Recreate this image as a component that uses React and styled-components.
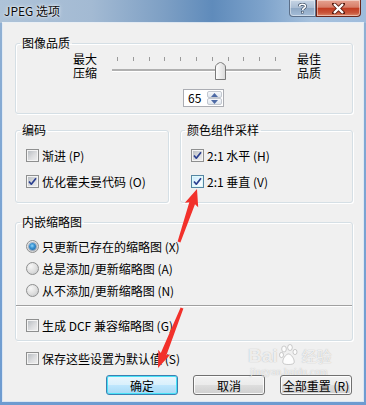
import React from 'react';
import styled, { createGlobalStyle } from 'styled-components';

const GlobalStyle = createGlobalStyle`
  html, body { margin: 0; padding: 0; }
  body {
    font-family: "Noto Sans CJK SC", "Noto Sans", sans-serif;
    font-size: 12px;
    color: #000;
  }
`;

const Window = styled.div`
  position: relative;
  width: 366px;
  height: 405px;
  display: flex;
  flex-direction: column;
  overflow: hidden;
  background: linear-gradient(180deg, #93b2d3 0%, #7ea6d3 40%, #6d9bd0 100%);
`;

const TitleBar = styled.div`
  height: 23px;
  display: flex;
  justify-content: space-between;
  align-items: flex-start;
  padding-left: 4px;
  background: linear-gradient(90deg, #aec3d8 0%, #a3bad3 25%, #7d9fc4 45%, #5f8bbb 58%, #7ea3cb 72%, #a6c1dd 85%, #9fbcdc 100%);
`;

const Title = styled.div`
  margin-top: 3px;
  line-height: 16px;
  font-size: 12px;
  color: #0b0b0b;
  text-shadow: 0 0 4px rgba(255, 255, 255, 0.9), 0 0 2px rgba(255, 255, 255, 0.9);
`;

const CaptionButtons = styled.div`
  display: flex;
  margin-right: 5px;
`;

const CaptionButton = styled.div`
  width: ${p => (p.$close ? 45 : 27)}px;
  height: 17px;
  box-sizing: border-box;
  display: flex;
  align-items: center;
  justify-content: center;
  border: 1px solid ${p => (p.$close ? '#6a261b' : '#5b6f89')};
  border-top: none;
  border-radius: ${p => (p.$close ? '0 0 4px 0' : '0 0 0 4px')};
  box-shadow: inset 0 0 0 1px rgba(255, 255, 255, 0.45);
  background: ${p =>
    p.$close
      ? 'linear-gradient(180deg, #e6a392 0%, #d77d68 45%, #c23c22 52%, #c9553a 80%, #dd8a6c 100%)'
      : 'linear-gradient(180deg, #c7d5e5 0%, #aabdd3 48%, #8fa8c4 52%, #a4bdd8 100%)'};
`;

const Client = styled.div`
  flex: 1;
  margin: 0 3px 4px 3px;
  padding: 13px 10px 0 12px;
  background: #f0f0f0;
  box-shadow: 0 0 0 1px rgba(255, 255, 255, 0.75);
  display: flex;
  flex-direction: column;
`;

const Group = styled.fieldset`
  margin: ${p => p.$top || 0}px 0 0 0;
  padding: 0;
  min-width: 0;
  flex: ${p => (p.$grow ? 1 : 'none')};
  width: ${p => (p.$width ? `${p.$width}px` : 'auto')};
  box-sizing: border-box;
  border: 1px solid #d5dfe5;
  border-radius: 3px;
  box-shadow: inset 1px 1px 0 #fff, 1px 1px 0 #fff;
`;

const Legend = styled.legend`
  margin-left: 4px;
  padding: 0 2px;
  line-height: 14px;
  font-size: 12px;
`;

const GroupBody = styled.div`
  display: flex;
  flex-direction: column;
  gap: ${p => p.$gap || 0}px;
  padding: ${p => p.$pad};
`;

const QualityRow = styled.div`
  display: flex;
  align-items: flex-start;
  padding-left: 57px;
`;

const StackLabel = styled.div`
  width: 24px;
  font-family: "Liberation Sans", "Noto Sans CJK SC", sans-serif;
  font-size: 12px;
  line-height: 13.5px;
  margin-top: -1px;
  margin-left: ${p => p.$ml || 0}px;
`;

const Slider = styled.div`
  position: relative;
  width: 169px;
  height: 24px;
  margin-left: 15px;
`;

const Ticks = styled.div`
  position: absolute;
  left: 5px;
  top: 2px;
  width: 160px;
  height: 4px;
  background: repeating-linear-gradient(90deg, #9a9a9a 0, #9a9a9a 1px, transparent 1px, transparent 15.8px);
`;

const Track = styled.div`
  margin-top: 14px;
  height: 2px;
  background: #b0b0b0;
  border-bottom: 1px solid #fff;
`;

const Thumb = styled.svg`
  position: absolute;
  top: 7px;
`;

const Spin = styled.div`
  display: flex;
  width: 41px;
  height: 18px;
  margin: 8px 0 0 167px;
  box-sizing: border-box;
  border: 1px solid #abadb3;
  background: #fff;
`;

const SpinValue = styled.div`
  flex: 1;
  padding-left: 4px;
  line-height: 16px;
  font-size: 12px;
`;

const SpinButtons = styled.div`
  width: 15px;
  display: flex;
  flex-direction: column;
  padding: 1px 1px 1px 0;
`;

const SpinButton = styled.div`
  flex: 1;
  display: flex;
  align-items: center;
  justify-content: center;
  border: 1px solid #c3c8d0;
  border-radius: 2px;
  background: linear-gradient(180deg, #f6f8fb, #dfe6ee);
`;

const Columns = styled.div`
  display: flex;
  gap: 11px;
  margin-top: 9px;
`;

const Option = styled.div`
  display: flex;
  align-items: center;
  height: 18px;
  gap: 3px;
  margin-left: ${p => p.$ml || 0}px;
  margin-top: ${p => p.$mt || 0}px;
  font-size: 12px;
  white-space: nowrap;
`;

const CheckBox = styled.span`
  flex: none;
  width: 13px;
  height: 13px;
  box-sizing: border-box;
  display: flex;
  align-items: center;
  justify-content: center;
  border: 1px solid ${p => (p.$focus ? '#5586a3' : '#8e8f8f')};
  box-shadow: inset 0 0 0 1px ${p => (p.$focus ? '#def9fa' : '#f4f4f4')};
  background: ${p =>
    p.$focus
      ? 'linear-gradient(135deg, #c6e9fc 0%, #f3fbff 70%, #ffffff 100%)'
      : 'linear-gradient(135deg, #b3b8bd 0%, #dcdddf 55%, #f1f1f1 100%)'};
`;

const Radio = styled.span`
  flex: none;
  width: 13px;
  height: 13px;
  box-sizing: border-box;
  border-radius: 50%;
  display: flex;
  align-items: center;
  justify-content: center;
  border: 1px solid #8e8f8f;
  background: radial-gradient(circle at 35% 30%, #f7f7f7 0%, #dedede 55%, #bfc2c5 100%);
`;

const RadioDot = styled.span`
  width: 7px;
  height: 7px;
  border-radius: 50%;
  background: radial-gradient(circle at 45% 40%, #8fd6fb 0%, #3a93d2 40%, #145b9b 100%);
  box-shadow: 0 0 0 1px rgba(30, 70, 120, 0.35);
`;

const Divider = styled.div`
  margin-top: 6px;
  height: 1px;
  background: #a0a0a0;
  border-bottom: 1px solid #fff;
`;

const ButtonRow = styled.div`
  display: flex;
  justify-content: flex-end;
  gap: 15px;
  margin-top: 8px;
  padding-right: 1px;
`;

const Button = styled.div`
  width: 72px;
  height: 20px;
  box-sizing: border-box;
  display: flex;
  align-items: center;
  justify-content: center;
  font-size: 12px;
  border: 1px solid ${p => (p.$default ? '#3c7fb1' : '#707070')};
  border-radius: 3px;
  box-shadow: inset 0 0 0 1px ${p => (p.$default ? '#48e2f7' : 'rgba(255,255,255,0.85)')};
  background: ${p =>
    p.$default
      ? 'linear-gradient(180deg, #eaf6fd 0%, #d9f0fc 48%, #bee6fd 52%, #a7d9f5 100%)'
      : 'linear-gradient(180deg, #f2f2f2 0%, #ebebeb 48%, #dddddd 52%, #cfcfcf 100%)'};
`;

const Overlay = styled.svg`
  position: absolute;
  left: 0;
  top: 0;
  pointer-events: none;
`;

const Watermark = styled.div`
  position: absolute;
  left: 248px;
  top: 344px;
  display: flex;
  flex-direction: column;
  align-items: flex-start;
  color: rgba(255, 255, 255, 0.8);
  text-shadow: 0 0 1px rgba(110, 110, 110, 0.55);
  pointer-events: none;
`;

const MarkTop = styled.div`
  display: flex;
  align-items: flex-end;
  gap: 1px;
  font-family: "Liberation Sans", sans-serif;
  font-size: 19px;
  font-weight: bold;
  line-height: 20px;
`;

const MarkCn = styled.span`
  font-family: "Noto Sans CJK SC", sans-serif;
  font-size: 15px;
  font-weight: normal;
  margin-left: 2px;
`;

const MarkUrl = styled.div`
  font-family: "Liberation Serif", serif;
  font-size: 10px;
  line-height: 11px;
  margin-left: 2px;
  letter-spacing: 0.2px;
`;

function arrowPoints(x1, y1, x2, y2, shaft, headL, headW) {
  const dx = x2 - x1;
  const dy = y2 - y1;
  const len = Math.hypot(dx, dy);
  const ux = dx / len;
  const uy = dy / len;
  const nx = -uy;
  const ny = ux;
  const bx = x2 - ux * headL;
  const by = y2 - uy * headL;
  const pts = [
    [x1 + nx * shaft * 0.25, y1 + ny * shaft * 0.25],
    [bx + ux * 2 + nx * shaft / 2, by + uy * 2 + ny * shaft / 2],
    [bx + nx * headW / 2, by + ny * headW / 2],
    [x2, y2],
    [bx - nx * headW / 2, by - ny * headW / 2],
    [bx + ux * 2 - nx * shaft / 2, by + uy * 2 - ny * shaft / 2],
    [x1 - nx * shaft * 0.25, y1 - ny * shaft * 0.25],
  ];
  return pts.map(p => `${p[0].toFixed(1)},${p[1].toFixed(1)}`).join(' ');
}

const Check = () => (
  <svg width="9" height="9" viewBox="0 0 9 9">
    <path d="M1 4.5 L3.3 7.2 L8 1.2" fill="none" stroke="#2a3f8f" strokeWidth="1.7" strokeLinejoin="round" />
  </svg>
);

const CheckOption = ({ checked, focus, ml, mt, children }) => (
  <Option $ml={ml} $mt={mt}>
    <CheckBox $focus={focus}>{checked && <Check />}</CheckBox>
    <span>{children}</span>
  </Option>
);

const RadioOption = ({ checked, children }) => (
  <Option>
    <Radio>{checked && <RadioDot />}</Radio>
    <span>{children}</span>
  </Option>
);

export default function App() {
  const quality = 65;
  const thumbLeft = 5 + (quality / 100) * 158 - 5;

  return (
    <Window>
      <GlobalStyle />
      <TitleBar>
        <Title>JPEG 选项</Title>
        <CaptionButtons>
          <CaptionButton>
            <svg width="9" height="11" viewBox="0 0 9 11">
              <path d="M1.5 3.2 C1.5 0.8 7.5 0.6 7.5 3.2 C7.5 5 4.6 5 4.6 7" fill="none" stroke="#34475f" strokeWidth="3" />
              <path d="M1.5 3.2 C1.5 0.8 7.5 0.6 7.5 3.2 C7.5 5 4.6 5 4.6 7" fill="none" stroke="#fff" strokeWidth="1.6" />
              <rect x="3.6" y="8.2" width="2" height="2" fill="#fff" stroke="#34475f" strokeWidth="0.6" />
            </svg>
          </CaptionButton>
          <CaptionButton $close>
            <svg width="13" height="11" viewBox="0 0 13 11">
              <path d="M2 1 L11 10 M11 1 L2 10" stroke="#5a1d12" strokeWidth="4" strokeLinecap="square" />
              <path d="M2 1 L11 10 M11 1 L2 10" stroke="#fff" strokeWidth="2.4" />
            </svg>
          </CaptionButton>
        </CaptionButtons>
      </TitleBar>

      <Client>
        <Group>
          <Legend>图像品质</Legend>
          <GroupBody $pad="5px 0 6px 0">
            <QualityRow>
              <StackLabel>最大<br />压缩</StackLabel>
              <Slider>
                <Ticks />
                <Track />
                <Thumb width="11" height="18" viewBox="0 0 11 18" style={{ left: thumbLeft }}>
                  <defs>
                    <linearGradient id="thumbFill" x1="0" x2="1" y1="0" y2="0">
                      <stop offset="0" stopColor="#ffffff" />
                      <stop offset="1" stopColor="#d9d9d9" />
                    </linearGradient>
                  </defs>
                  <path d="M0.5 17.5 V5 Q0.5 3.5 2 2.2 L4.4 0.7 Q5.5 0.1 6.6 0.7 L9 2.2 Q10.5 3.5 10.5 5 V17.5 Z" fill="url(#thumbFill)" stroke="#7a7a7a" />
                </Thumb>
              </Slider>
              <StackLabel $ml={16}>最佳<br />品质</StackLabel>
            </QualityRow>
            <Spin>
              <SpinValue>{quality}</SpinValue>
              <SpinButtons>
                <SpinButton>
                  <svg width="7" height="4" viewBox="0 0 7 4"><path d="M0 4 L3.5 0 L7 4 Z" fill="#4d6aa5" /></svg>
                </SpinButton>
                <SpinButton>
                  <svg width="7" height="4" viewBox="0 0 7 4"><path d="M0 0 L3.5 4 L7 0 Z" fill="#4d6aa5" /></svg>
                </SpinButton>
              </SpinButtons>
            </Spin>
          </GroupBody>
        </Group>

        <Columns>
          <Group $width={154}>
            <Legend>编码</Legend>
            <GroupBody $pad="9px 0 12px 10px" $gap={8}>
              <CheckOption>渐进 (P)</CheckOption>
              <CheckOption checked>优化霍夫曼代码 (O)</CheckOption>
            </GroupBody>
          </Group>
          <Group $grow>
            <Legend>颜色组件采样</Legend>
            <GroupBody $pad="9px 0 12px 10px" $gap={8}>
              <CheckOption checked>2:1 水平 (H)</CheckOption>
              <CheckOption checked focus>2:1 垂直 (V)</CheckOption>
            </GroupBody>
          </Group>
        </Columns>

        <Group $top={12}>
          <Legend>内嵌缩略图</Legend>
          <GroupBody $pad="8px 0 0 10px" $gap={4}>
            <RadioOption checked>只更新已存在的缩略图 (X)</RadioOption>
            <RadioOption>总是添加/更新缩略图 (A)</RadioOption>
            <RadioOption>从不添加/更新缩略图 (N)</RadioOption>
          </GroupBody>
          <Divider />
          <GroupBody $pad="9px 0 6px 10px">
            <CheckOption>生成 DCF 兼容缩略图 (G)</CheckOption>
          </GroupBody>
        </Group>

        <CheckOption ml={11} mt={8}>保存这些设置为默认值 (S)</CheckOption>

        <ButtonRow>
          <Button $default>确定</Button>
          <Button>取消</Button>
          <Button>全部重置 (R)</Button>
        </ButtonRow>
      </Client>

      <Watermark>
        <MarkTop>
          Bai
          <svg width="20" height="22" viewBox="0 0 20 22">
            <g fill="rgba(255,255,255,0.85)" stroke="rgba(120,120,120,0.5)" strokeWidth="0.7">
              <ellipse cx="5" cy="5" rx="2.3" ry="3" />
              <ellipse cx="11" cy="3.5" rx="2.3" ry="3" />
              <ellipse cx="2.5" cy="11" rx="2" ry="2.6" />
              <ellipse cx="16" cy="8" rx="2" ry="2.6" />
              <path d="M4 19 C3 15 7 10 9.5 10 C12 10 16 15 15 19 C14 21 5 21 4 19 Z" />
            </g>
          </svg>
          <MarkCn>经验</MarkCn>
        </MarkTop>
        <MarkUrl>jingyan.baidu.com</MarkUrl>
      </Watermark>

      <Overlay width="366" height="405" viewBox="0 0 366 405">
        <polygon points={arrowPoints(179, 242, 197, 189, 6, 17, 14)} fill="#f2312b" />
        <polygon points={arrowPoints(182, 308, 158, 368, 6, 17, 13)} fill="#f2312b" />
      </Overlay>
    </Window>
  );
}
